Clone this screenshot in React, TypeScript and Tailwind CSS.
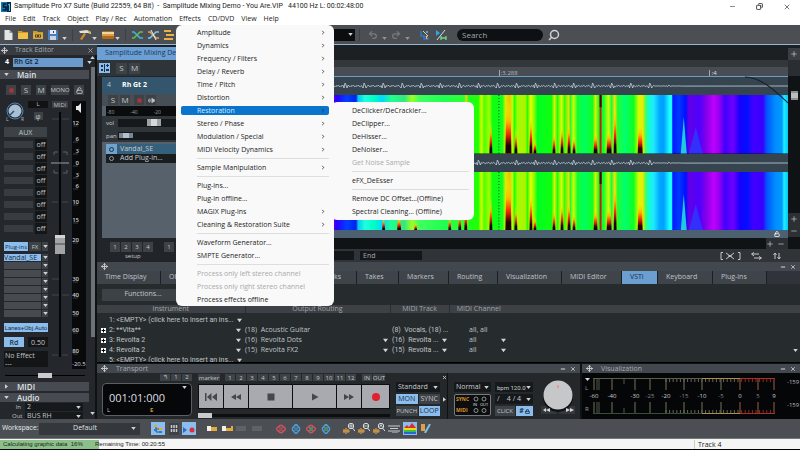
import type { ReactNode } from "react";
import clsx from "clsx";
import { Search, Undo2, Redo2, X, Minus, Plus, Copy, Lock, LockOpen, Volume2, Move } from "lucide-react";

const MENUS = ["File", "Edit", "Track", "Object", "Play / Rec", "Automation", "Effects", "CD/DVD", "View", "Help"];

interface MenuEntry {
  label: string;
  sub?: boolean;
  disabled?: boolean;
}

// null = separator
const EFFECTS: (MenuEntry | null)[] = [
  { label: "Amplitude", sub: true },
  { label: "Dynamics", sub: true },
  { label: "Frequency / Filters", sub: true },
  { label: "Delay / Reverb", sub: true },
  { label: "Time / Pitch", sub: true },
  { label: "Distortion", sub: true },
  { label: "Restoration", sub: true },
  { label: "Stereo / Phase", sub: true },
  { label: "Modulation / Special", sub: true },
  { label: "MIDI Velocity Dynamics", sub: true },
  null,
  { label: "Sample Manipulation", sub: true },
  null,
  { label: "Plug-ins..." },
  { label: "Plug-in offline..." },
  { label: "MAGIX Plug-ins", sub: true },
  { label: "Cleaning & Restoration Suite", sub: true },
  null,
  { label: "Waveform Generator..." },
  { label: "SMPTE Generator..." },
  null,
  { label: "Process only left stereo channel", disabled: true },
  { label: "Process only right stereo channel", disabled: true },
  { label: "Process effects offline" },
];

const RESTORATION: (MenuEntry | null)[] = [
  { label: "DeClicker/DeCrackler..." },
  { label: "DeClipper..." },
  { label: "DeHisser..." },
  { label: "DeNoiser..." },
  { label: "Get Noise Sample", disabled: true },
  null,
  { label: "eFX_DeEsser" },
  null,
  { label: "Remove DC Offset...(Offline)" },
  { label: "Spectral Cleaning... (Offline)" },
];

function Menu({ items, active, className }: { items: (MenuEntry | null)[]; active?: string; className: string }) {
  return (
    <ul role="menu" className={clsx("rounded-md bg-[#f9f9f9] text-[7px] leading-[13px] text-[#1c1c1c]", className)}>
      {items.map((item, i) =>
        item === null ? (
          <li key={i} role="separator" className="ml-4 py-0.5">
            <div className="h-px bg-[#dedede]" />
          </li>
        ) : (
          <li key={i} role="none" className="flex h-[13px] items-center">
            <button
              role="menuitem"
              disabled={item.disabled}
              className={clsx(
                "flex h-[9px] w-full items-center justify-between rounded-xs pr-1 pl-4 whitespace-nowrap",
                item.disabled && "text-[#a9a9a9]",
                active === item.label && "bg-[#0a74cc] text-[#d5ecff]"
              )}
            >
              {item.label}
              {item.sub && (
                <svg viewBox="0 0 4 6" className="h-[5px] w-1" fill="none" stroke={active === item.label ? "#1c3c60" : "#333"}>
                  <path d="M1 1l2 2-2 2" />
                </svg>
              )}
            </button>
          </li>
        )
      )}
    </ul>
  );
}

function Caret({ className }: { className?: string }) {
  return (
    <svg viewBox="0 0 6 4" className={clsx("h-[3px] w-[5px] shrink-0", className)} fill="#d0d3d6">
      <path d="M0 0h6L3 4z" />
    </svg>
  );
}

function Divider() {
  return <div className="h-3 w-px bg-[#3b3f43]" />;
}

function DropDown({ label, value, className }: { label: string; value: string; className: string }) {
  return (
    <div className={clsx("flex items-center bg-[#16191b] pr-0.5", className)}>
      <select aria-label={label} className="min-w-0 flex-1 appearance-none bg-transparent pl-0.5 text-inherit outline-none">
        <option>{value}</option>
      </select>
      <Caret />
    </div>
  );
}

function Chip({ children, on, className }: { children: ReactNode; on?: boolean; className?: string }) {
  return (
    <button
      className={clsx(
        "flex items-center justify-center whitespace-nowrap",
        on ? "bg-[#8cbdec] text-[#17314b]" : "bg-[#3d4247] text-[#c3c6c9]",
        className
      )}
    >
      {children}
    </button>
  );
}

function DockTitle({ title, buttons = true }: { title?: string; buttons?: boolean }) {
  return (
    <div className="flex h-[9px] shrink-0 items-center gap-2 bg-[#43474e] px-1 text-[7px] leading-[9px] text-[#a6aaae]">
      <Move className="size-[7px] text-[#d5d8da]" strokeWidth={3} />
      <span className="flex-1">{title}</span>
      {buttons && (
        <>
          <button aria-label="Minimize panel" className="-mr-1">
            <Minus className="size-[6px] text-[#d5d8da]" strokeWidth={4} />
          </button>
          <button aria-label="Close panel">
            <X className="size-[6px] text-[#d5d8da]" strokeWidth={3} />
          </button>
        </>
      )}
    </div>
  );
}

function AppLogo() {
  return (
    <svg viewBox="0 0 10 10" className="size-[10px]">
      <path fill="#1679b5" d="M0 0h10v10H0z" />
      <path fill="#0a2a42" d="M6 0h4v10H6z" />
      <path d="M5.500 2H2.500v3H5v3H1.500" fill="none" stroke="#061c2d" strokeWidth="1.600" />
      <path d="M7 3l1.500-1v7" fill="none" stroke="#53c4f2" />
    </svg>
  );
}

function TitleBar() {
  return (
    <div className="flex h-[13px] items-center gap-[3px] bg-white px-px text-[7px] text-[#1c1c1c]">
      <AppLogo />
      <span className="flex-1 font-['Roboto',sans-serif] whitespace-pre">
        Samplitude Pro X7 Suite (Build 22559, 64 Bit)  -  Samplitude Mixing Demo - You Are.VIP   44100 Hz L: 00:02:48:00
      </span>
      <div className="flex gap-5 pr-2 text-[#333]">
        <button aria-label="Minimize"><Minus className="size-[7px]" /></button>
        <button aria-label="Restore"><Copy className="size-[7px] rotate-90" strokeWidth={3} /></button>
        <button aria-label="Close"><X className="size-2" /></button>
      </div>
    </div>
  );
}

function Toolbar() {
  return (
    <div className="flex h-5 shrink-0 items-center border-b border-[#8fb8d8] bg-[#4b4f54]">
      <div className="flex w-[334px] items-center gap-[5px] pl-1">
        <svg viewBox="0 0 8 10" className="h-[10px] w-[9px]"><path d="M0 0h5l3 3v7H0z" fill="#e2e4e6" /><path d="M5 0v3h3" fill="#999" /></svg>
        <svg viewBox="0 0 10 9" className="h-[9px] w-[10px]"><path d="M0 1h4l1 1h5v7H0z" fill="#cf9a1d" /><path d="M0 3h10v6H0z" fill="#efc14a" /></svg>
        <svg viewBox="0 0 10 9" className="h-[9px] w-[10px]"><path d="M0 1h4l1 1h5v7H0z" fill="#d09c20" /><path d="M0 3h10v6H0z" fill="#dbac3b" /><path d="M2 4.500h6v3H2z" fill="#574415" /><path d="M3 6h1m2 0h1" stroke="#eee" /></svg>
        <svg viewBox="0 0 10 10" className="size-[10px]"><path d="M0 0h9l1 1v9H0z" fill="#4c7fc0" /><path d="M2 0h6v4H2z" fill="#e8ecf2" /><path d="M2 6h6v4H2z" fill="#cdd4dd" /><path d="M5.500 1v2" stroke="#345" /></svg>
        <Caret className="mt-2 -ml-px" />
        <Divider />
        <svg viewBox="0 0 12 10" className="ml-px h-[10px] w-3"><path d="M0 1l8-1 4 2v2L9 3H1z" fill="#e3e1da" /><path d="M5 3l2 1-4 6-2-1z" fill="#d28b24" /><path d="M8 0l4 2-1 2z" fill="#e79c2c" /></svg>
        <Caret className="mt-2 -ml-1" />
        <svg viewBox="0 0 12 8" className="h-2 w-3"><rect width="12" height="8" rx="1" fill="#ad6b1c" /><path d="M0 3h12V1H0z" fill="#ecd7a8" /><path d="M0 3h12v2H0z" fill="#e69a38" /></svg>
        <Caret className="mt-2 -ml-1" />
        <Divider />
        <svg viewBox="0 0 11 10" className="ml-px h-[10px] w-[11px]" fill="none" strokeWidth="1.600"><path d="M0 2h2l6 6h3" stroke="#37b5ec" /><path d="M0 8h2l6-6h3" stroke="#62bd4c" /></svg>
        <svg viewBox="0 0 11 10" className="h-[10px] w-[11px]" fill="none" strokeWidth="1.600"><path d="M0 2h2l6 6h3" stroke="#eaa14a" /><path d="M0 8h2l6-6h3" stroke="#7cc7ef" /><path d="M3 0l5 10" stroke="#eee" strokeWidth="1" /></svg>
        <svg viewBox="0 0 10 10" className="size-[10px]" strokeWidth="2"><path d="M0 1h7M2 5h8M0 9h9" stroke="#edb042" /></svg>
      </div>
      <div className="flex h-3 w-[21px] items-center justify-end bg-[#0b0d0e] pr-[2px]"><Caret /></div>
      <div className="ml-1 flex items-center gap-1 text-[#777b80]">
        <Divider />
        <Undo2 className="ml-1 size-[10px]" strokeWidth={3} />
        <Caret className="mt-2 opacity-50" />
        <Redo2 className="size-[10px]" strokeWidth={3} />
        <Caret className="mt-2 opacity-50" />
      </div>
      <svg viewBox="0 0 10 10" className="ml-[10px] size-[10px]"><path d="M1 1v5h3v3h5" fill="none" stroke="#2b79c9" strokeWidth="1.500" /><path d="M3 1l5 5-2 .5L7 9" fill="none" stroke="#e8d48c" /><path d="M6 1h2v2H6z" fill="#40a5ec" /></svg>
      <svg viewBox="0 0 12 10" className="ml-[5px] h-[10px] w-3"><path d="M1 0l4 3-4 3z" fill="#26a8ec" /><path d="M10 0L2 10" stroke="#d7dadb" /><path d="M6 6v4m5-4v4M6 8h5" stroke="#6cd78d" strokeWidth="1.300" /></svg>
      <input
        type="search"
        aria-label="Search"
        placeholder="Search"
        className="ml-[10px] h-3 w-[86px] rounded-full bg-[#0e1113] px-[5px] text-[8px] text-[#a0a4a8] outline-none placeholder:text-[#a0a4a8]"
      />
      <button aria-label="Find" className="ml-[5px]">
        <Search className="size-3 -scale-x-100 text-[#d0d3d6]" strokeWidth={3} />
      </button>
    </div>
  );
}

const SCALE: [string, number][] = [
  ["12", 22], ["6", 38], ["3", 50], ["0", 62], ["3", 74], ["6", 85], ["10", 101], ["15", 119],
  ["20", 139], ["30", 178], ["40", 194], ["50", 212], ["60", 229], ["80", 250],
];

function ChannelFader() {
  return (
    <svg viewBox="48 0 40 268" className="h-[268px] w-10 shrink-0">
      <rect x="72" y="0" width="14" height="268" fill="#08090a" />
      <rect x="52" y="0" width="16" height="7" fill="#3a3e42" />
      <text x="60" y="6" textAnchor="middle" fontSize="6" fill="#b9bcbf">MIDI</text>
      <path d="M76 5h2l3-3v10l-3-3h-2z" fill="#e6e8ea" />
      <path d="M60 11v245" stroke="#050607" strokeWidth="2" />
      <path d="M52 18h7M62 18h7M52 101h6M62 101h6M52 178h7M52 194h7M62 194h7M52 254h6M62 254h6" stroke="#42474b" />
      <path d="M51 62h18" stroke="#9a9da0" />
      <path d="M54 54v-3h4M63 51h4v3M54 69v3h4M63 72h4v-3" fill="none" stroke="#5d6165" />
      {SCALE.map(([label, y]) => (
        <g key={y}>
          <text x="79" y={y + 2} textAnchor="end" fontSize="6" fontWeight="600" fill="#c9ccce">{label}</text>
          <path d={`M73 ${y + 3}h5`} stroke="#3b3f42" />
        </g>
      ))}
      <text x="72" y="265" fontSize="6" fill="#dcdee0">-20.5</text>
      <rect x="55" y="134" width="10" height="19" fill="#a2a4a6" />
      <path d="M55 134h10v3H55z" fill="#d3d4d5" />
      <path d="M55 143h10" stroke="#45484b" />
    </svg>
  );
}

function SectionBar({ title, open }: { title: string; open?: boolean }) {
  return (
    <button className="flex h-[9px] w-[89px] shrink-0 items-center gap-2 bg-[#474b51] pl-1 text-[8px] font-semibold text-[#dfe1e3]">
      <Caret className={open ? "" : "-rotate-90"} />
      {title}
    </button>
  );
}

function TrackEditor() {
  return (
    <aside className="flex w-[97px] shrink-0 flex-col overflow-hidden bg-[#24282c] text-[7px] text-[#c3c6c9]">
      <div className="flex h-[10px] shrink-0 items-center bg-[#383c41] px-px text-[#a6aaae]">
        <Move className="size-[7px] text-[#d5d8da]" strokeWidth={3} />
        <span className="ml-[7px] flex-1">Track Editor</span>
        <button aria-label="Close track editor"><X className="mr-[2px] size-[7px]" strokeWidth={3} /></button>
      </div>
      <div className="flex min-h-0 flex-1">
        <div className="flex min-w-0 flex-1 flex-col">
          <div className="flex h-[15px] shrink-0 items-center gap-1 pl-[5px]">
            <span className="font-bold text-white">4</span>
            <input aria-label="Track name" defaultValue="Rh Gt 2" className="h-[9px] w-[70px] bg-[#6a9bcc] px-px text-[7px] font-semibold text-[#10253a] outline-none" />
            <Caret />
          </div>
          <SectionBar title="Main" open />
          <div className="flex h-[22px] shrink-0 items-center justify-between pr-[6px] pl-[6px]">
            <Chip className="size-[10px]"><span className="size-[5px] rounded-full bg-[#a3333d]" /></Chip>
            <Chip className="size-[10px] text-[8px]">S</Chip>
            <Chip className="size-[10px] text-[8px]">M</Chip>
            <Chip className="h-[10px] w-[18px] text-[6px]">MONO</Chip>
            <Chip className="size-[10px]"><LockOpen className="size-[7px]" strokeWidth={3} /></Chip>
          </div>
          <div className="flex shrink-0">
            <div className="flex w-12 shrink-0 flex-col pl-1 leading-none">
              <div className="flex h-[26px] gap-1">
                <svg viewBox="0 0 20 21" className="h-[21px] w-5">
                  <circle cx="11" cy="10" r="8" fill="none" stroke="#4f86b8" />
                  <circle cx="11" cy="10" r="6.500" fill="#a9bfd2" />
                  <path d="M10 10l-6 6" stroke="#254f77" strokeWidth="1.500" />
                  <text x="2" y="20" fontSize="5" fill="#b9bcbf">L</text>
                  <text x="17" y="20" fontSize="5" fill="#b9bcbf">R</text>
                </svg>
                <div className="flex flex-1 flex-col items-center gap-1">
                  <span className="h-[7px] w-full bg-[#101214] text-center text-[6px]">L</span>
                  <Chip className="h-[8px] w-[9px] text-[7px]">φ</Chip>
                </div>
              </div>
              <Chip className="h-[10px] w-[43px]">AUX</Chip>
              <div className="mt-px flex flex-col">
                {Array.from({ length: 8 }, (_, i) => (
                  <div key={i} className="flex h-3 items-center gap-[2px]">
                    <span className="h-[7px] w-[29px] bg-[#383c40]" />
                    <span className="flex h-[11px] w-3 items-center justify-center bg-[#131517]">off</span>
                  </div>
                ))}
              </div>
              <div className="mt-2 flex h-[9px] gap-px text-[6px]">
                <Chip on className="w-6">Plug-ins</Chip>
                <Chip className="w-3">FX</Chip>
                <Chip className="w-[6px]"><Caret /></Chip>
              </div>
              <div className="mt-[3px] flex h-[7px] gap-px">
                <button className="w-[37px] bg-[#8cbdec] text-left text-[7px] leading-[7px] text-[#17314b]">Vandal_SE</button>
                <Chip className="w-[6px]"><Caret /></Chip>
              </div>
              {Array.from({ length: 7 }, (_, i) => (
                <div key={i} className="mt-px flex h-[7px] gap-px">
                  <span className="w-[37px] bg-[#474b50]" />
                  <Chip className="w-[6px]"><Caret /></Chip>
                </div>
              ))}
              <Chip on className="mt-[6px] h-[9px] w-11 font-['Roboto',sans-serif] text-[6px]">Lanes+Obj.Auto</Chip>
              <div className="mt-[5px] flex h-[10px] gap-1">
                <Chip on className="w-5 font-semibold">Rd</Chip>
                <span className="flex flex-1 items-center justify-center bg-[#131517]">0.50</span>
              </div>
              <div className="mt-1 h-4 w-11 bg-[#131517] p-px leading-2">No Effect<br />---</div>
            </div>
            <ChannelFader />
          </div>
          <div className="flex h-[13px] shrink-0 items-center justify-center">
            <input type="range" aria-label="Pan" className="h-[5px] w-[80px] appearance-none border-y-2 border-[#24282c] bg-black [&::-webkit-slider-thumb]:h-[5px] [&::-webkit-slider-thumb]:w-[14px] [&::-webkit-slider-thumb]:appearance-none [&::-webkit-slider-thumb]:bg-[#c9cbcd]" />
          </div>
          <div className="flex flex-col gap-[2px]">
            <SectionBar title="MIDI" />
            <SectionBar title="Audio" open />
          </div>
          <div className="flex flex-col gap-px pt-px pl-3 leading-[8px]">
            <label className="flex items-center gap-1"><span className="w-[9px] text-right text-[6px]">In</span><DropDown label="Audio in" value=" 2" className="h-2 w-[58px]" /></label>
            <label className="flex items-center gap-1"><span className="w-[9px] text-right text-[6px]">Out</span><DropDown label="Audio out" value="BUS RH" className="h-2 w-[58px]" /></label>
          </div>
        </div>
        <div className="flex w-[5px] shrink-0 flex-col items-center pt-px pb-1">
          <Caret className="rotate-180" />
          <div className="mt-2 h-[270px] w-1 bg-[#6b7379]" />
          <Caret className="mt-auto" />
        </div>
        <div className="w-[2px] bg-[#0f1113]" />
      </div>
    </aside>
  );
}

function TrackHeader() {
  return (
    <div className="flex w-[231px] shrink-0 flex-col bg-[#56616c] text-[7px] text-[#c9ccce]">
      <div className="flex h-[17px] shrink-0 items-center gap-[11px] bg-[#34566c] pl-[5px]">
        <span className="text-[#a9c3d5]">4</span>
        <span className="font-bold text-white">Rh Gt 2</span>
      </div>
      <div className="flex h-3 shrink-0 items-center gap-[2px] bg-[#474e55] pl-[6px]">
        <Chip className="size-[10px] text-[8px]">S</Chip>
        <Chip className="size-[10px] text-[8px]">M</Chip>
        <Chip className="ml-[2px] size-[10px]"><span className="size-[5px] rounded-full bg-[#a3333d]" /></Chip>
        <Chip className="size-[10px]"><Volume2 className="size-[7px] -scale-x-100 fill-current" /></Chip>
      </div>
      <div className="ml-1 flex h-[10px] shrink-0 items-end gap-4 bg-[#0a0c0d] pb-px text-[5px] leading-none text-[#9a9da0]">
        <span className="ml-px">-80</span><span>-40</span><span>-20</span>
      </div>
      <div className="flex h-[26px] shrink-0 flex-col justify-around bg-[#30353a] pl-1">
        <label className="flex items-center gap-1 leading-none">
          <span className="w-2 text-[6px]">vol</span>
          <span className="flex h-2 flex-1 items-center bg-[#16191b]"><span className="ml-[29px] h-[7px] w-[14px] border-x-4 border-[#9fa2a5] bg-[#d5d7d9]" /></span>
        </label>
        <label className="flex items-center gap-1 leading-none">
          <span className="w-2 text-[6px]">pan</span>
          <span className="flex h-2 flex-1 items-center bg-[#16191b]"><span className="ml-px h-[5px] w-[14px] border-x-4 border-[#75879a] bg-[#b4c0cb]" /></span>
        </label>
      </div>
      <div className="mt-[2px] ml-1 flex h-[10px] shrink-0 items-center gap-[3px] bg-[#34607c]">
        <span className="flex h-full w-[11px] items-center justify-center bg-[#6fa3cc]"><span className="size-[5px] rounded-full border border-[#193248]" /></span>
        Vandal_SE
      </div>
      <button className="ml-1 flex h-[9px] shrink-0 items-center gap-[3px] bg-[#1a1d20]">
        <span className="flex w-[11px] justify-center"><span className="size-[5px] rounded-full border border-[#9a9da0]" /></span>
        Add Plug-in...
      </button>
    </div>
  );
}

// horizontal colour profile of the spectrogram, x in lane units (0..454)
const SPECTRUM: [number, string][] = [
  [0, "#6000e0"], [4, "#2a00ff"], [14, "#0040ff"], [23, "#0020f0"], [25, "#00c8f0"], [32, "#20ffe0"], [41, "#00ffc0"],
  [49, "#00d8ff"], [58, "#20ff90"], [71, "#30e880"], [79, "#a0ff20"], [86, "#40ff60"], [111, "#20ff50"], [131, "#30ff30"],
  [133, "#ffd000"], [135, "#20ff20"], [145, "#20ff00"], [148, "#d0ff00"], [151, "#50ff00"], [156, "#a0ff00"], [159, "#10ff10"],
  [169, "#10ff20"], [172, "#d0f000"], [176, "#f0c000"], [179, "#c0ff00"], [181, "#20ff10"], [184, "#a0ff00"], [192, "#b0f000"],
  [194, "#20ff00"], [197, "#e8ff00"], [201, "#80ff00"], [204, "#00ff20"], [218, "#10ff10"], [221, "#e0f000"], [224, "#20ff10"],
  [228, "#e0ff00"], [231, "#30ff10"], [235, "#e8e000"], [237, "#20ff30"], [240, "#d0ff00"], [244, "#10ff30"], [251, "#00ff60"],
  [259, "#10ff20"], [262, "#e0f000"], [265, "#20ff20"], [270, "#10ff30"], [275, "#d0ff00"], [278, "#10ff40"], [281, "#ffe000"],
  [284, "#20ff30"], [291, "#00ff70"], [300, "#10ff20"], [305, "#d0ff00"], [309, "#f0e800"], [312, "#40ff60"], [315, "#10ffd0"],
  [320, "#20e8ff"], [326, "#00a8ff"], [330, "#00a0ff"], [336, "#20ffff"], [338, "#10ffff"], [339, "#0018ff"], [345, "#0038ff"],
  [352, "#0010ff"], [355, "#6000e8"], [366, "#5000ff"], [372, "#8000e8"], [380, "#c000ff"], [386, "#9000f0"], [391, "#4000ff"],
  [399, "#7000ff"], [406, "#1800ff"], [413, "#0010ff"], [419, "#4000ff"], [429, "#3800ff"], [433, "#0058ff"], [442, "#0090ff"],
  [448, "#0098ff"], [450, "#20f0ff"], [454, "#00c8ff"],
];

// transients: x, width, height
const BURSTS: [number, number, number][] = [
  [49, 3, 14], [64, 4, 14], [81, 3, 8], [115, 3, 14], [125, 3, 18], [131, 3, 26], [156, 3, 32], [172, 6, 52], [181, 3, 26],
  [196, 3, 40], [200, 3, 14], [219, 3, 22], [227, 3, 30], [234, 3, 32], [239, 3, 18], [260, 4, 22], [273, 5, 24],
  [280, 3, 48], [304, 5, 30],
];

function wavePath() {
  const pts: string[] = [];
  for (let x = 0; x < 350; x += 1) {
    const phase = x % 19;
    const spike = [2, -3, -1, 2][phase - 11] ?? (((x * 7) % 5) - 2) * 0.4;
    pts.push(`${x} ${(9 + spike * (x > 320 ? 0.3 : 1)).toFixed(1)}`);
  }
  return `M${pts.join("L")}L454 9`;
}

function WaveLane({ fade }: { fade?: boolean }) {
  return (
    <svg viewBox="0 0 454 18" preserveAspectRatio="none" className="relative z-10 h-[18px] w-full shrink-0 overflow-visible bg-[#35444f]">
      <path d={wavePath()} fill="none" stroke="#c3d2da" strokeWidth="0.800" />
      {fade && <path d="M411 0c18 1 30 14 43 26" fill="none" stroke="#14202a" />}
    </svg>
  );
}

function SpectrumLane() {
  return (
    <svg viewBox="0 0 454 58" preserveAspectRatio="none" className="min-h-0 w-full flex-1">
      <defs>
        <linearGradient id="spec">
          {SPECTRUM.map(([x, c]) => (
            <stop key={x} offset={x / 454} stopColor={c} />
          ))}
        </linearGradient>
        <linearGradient id="burst" x2="0" y2="1">
          <stop offset="0" stopColor="#ffff00" stopOpacity="0" />
          <stop offset="0.400" stopColor="#ffb000" />
          <stop offset="0.650" stopColor="#f02000" />
          <stop offset="0.850" stopColor="#200000" />
        </linearGradient>
      </defs>
      <path d="M0 0h454v58H0z" fill="url(#spec)" />
      {BURSTS.map(([x, w, h]) => (
        <path key={x} d={`M${x} 58l1 ${-h}h${w - 2}l1 ${h}z`} fill="url(#burst)" />
      ))}
      <path d="M266 0h2v58h-2z" fill="#c02010" />
      <path d="M266 0h2v12h-2z" fill="#400" />
      <path d="M347 58l3-36 3 36z" fill="#20c8e0" />
      <path d="M355 58l7-26 7 26z" fill="#1060ff" opacity="0.500" />
      <path d="M165.500 0v58" stroke="#0a4a10" strokeDasharray="1 2" />
    </svg>
  );
}

function Arrange() {
  return (
    <section className="flex min-h-0 flex-1 flex-col">
      <div className="flex h-[15px] shrink-0 items-end bg-[#1c2023]">
        <div className="flex h-[13px] w-[236px] items-center bg-[#6c9fd4] pl-2 text-[7px] text-[#1c3a58]">Samplitude Mixing Demo</div>
        <button aria-label="Add tab" className="ml-auto flex size-3 items-center justify-center bg-[#3b3f43] text-[#c9ccce]"><Plus className="size-2" /></button>
      </div>
      <div className="flex min-h-0 flex-1">
        <div className="flex w-[236px] shrink-0 flex-col bg-[#212529]">
          <div className="flex h-4 shrink-0 items-center gap-[2px] bg-[#2f3439] pl-[2px]">
            <Chip on className="mr-1 h-[10px] w-[11px]">
              <svg viewBox="0 0 8 8" className="size-2" fill="#18324c"><path d="M0 1h2v2H0zM3 0h1v8H3zM0 5h2v2H0zM5 1h3v1H5zM6 0h1v3H6zM5 5h3v2H5z" /></svg>
            </Chip>
            <Chip className="size-[11px] text-[8px]">S</Chip>
            <Chip className="size-[11px] text-[8px]">M</Chip>
          </div>
          <div className="flex min-h-0 flex-1 pt-px pl-[5px]"><TrackHeader /></div>
          <div className="flex h-6 shrink-0 flex-col pt-1 pl-[13px] text-[6px] text-[#c9ccce]">
            <div className="flex gap-px leading-none text-[#777b80]">
              {["1", "2", "3", "4"].map((n) => <Chip key={n} className="h-[10px] w-[10px] text-[#85898d]">{n}</Chip>)}
              <Chip className="ml-[10px] size-[10px]">1</Chip>
            </div>
            <span className="ml-[15px] leading-[9px]">setup</span>
          </div>
        </div>
        <div className="flex min-w-0 flex-1 flex-col">
          <div className="flex min-h-0 flex-1">
            <div className="flex min-w-0 flex-1 flex-col">
              <div className="h-[7px] shrink-0 bg-[#33373b]" />
              <div className="flex h-[10px] shrink-0 items-end border-b border-[#6c9dc4] bg-[#484d53] text-[6px] leading-[9px] text-[#b3b7ba]">
                <span className="w-[36%]" />
                <span className="ml-[2px] border-l border-[#a3a7aa] pl-px leading-[6px]">:3.288</span>
                <span className="ml-[191px] border-l border-[#a3a7aa] pl-[2px] leading-[6px] text-[#dfe1e3]">:4</span>
              </div>
              <WaveLane fade />
              <SpectrumLane />
              <WaveLane />
              <SpectrumLane />
              <div className="flex h-2 shrink-0 items-center justify-end bg-[#4d6070] pr-2"><LockOpen className="size-[6px] text-white" strokeWidth={3} /></div>
            </div>
            <div className="flex w-3 shrink-0 flex-col items-center bg-[#101315] pb-px text-[#c9ccce]">
              <div className="mb-[15px] h-4 w-full bg-[#2a2e32]" />
              <div className="h-[9px] w-[7px] border-y-2 border-[#8d9093] bg-[#bbbdbf]" />
              <button aria-label="Zoom in vertically" className="mt-auto bg-[#2c3034] p-0.5"><Plus className="size-2" /></button>
              <button aria-label="Zoom out vertically" className="bg-[#2c3034] p-0.5"><Minus className="size-2" /></button>
            </div>
          </div>
          <div className="flex h-[11px] shrink-0 items-center justify-end bg-[#101315] pr-3 text-[#c9ccce]">
            <button aria-label="Zoom in" className="flex h-full w-[11px] items-center bg-[#2c3034]"><Plus className="size-2" /></button>
            <button aria-label="Zoom out" className="flex h-full w-[11px] items-center bg-[#2c3034]"><Minus className="size-2" /></button>
          </div>
          <div className="flex h-[13px] shrink-0 items-center bg-[#303439] text-[7px] text-[#a6aaae]">
            <div className="h-[9px] w-[21px] bg-[#14171a]" />
            <div className="ml-[6px] h-[9px] w-[62px] bg-[#14171a] pl-[3px] leading-[9px]">End</div>
            <svg viewBox="0 0 64 8" className="mr-4 ml-auto h-2 w-16" fill="none" stroke="#c3c6c9">
              <path d="M3 .5H1v7h2M18 .5h2v7h-2M6 1l8 6M14 1L6 7M8 4h4" />
              <path d="M32 2h7M34 .5L31.500 2 34 4M34 6h7M39 4.500L41.500 6 39 7.500M55 1v6M53.500 3L55 1l1.500 2M59 1v6M57.500 5L59 7l1.500-2" />
            </svg>
          </div>
        </div>
      </div>
    </section>
  );
}

const DOCK_TABS = [
  { label: "Time Display", width: "w-[64px]" },
  { label: "Object", width: "w-[151px]" },
  { label: "Tracks", width: "w-[45px]" },
  { label: "Takes", width: "w-[42px]" },
  { label: "Markers", width: "w-[50px]" },
  { label: "Routing", width: "w-[49px]" },
  { label: "Visualization", width: "w-[64px]" },
  { label: "MIDI Editor", width: "w-[60px]" },
  { label: "VSTi", width: "w-[36px]" },
  { label: "Keyboard", width: "w-[55px]" },
  { label: "Plug-ins", width: "w-[54px]" },
];

const INSTRUMENTS = [
  { name: "1: <EMPTY> (click here to insert an ins...", routing: "", track: "", channel: "" },
  { name: "2: **Vita**", routing: "(18)  Acoustic Guitar", track: "(8)  Vocals, (18) ...", channel: "all, all" },
  { name: "3: Revolta 2", routing: "(16)  Revolta Dots", track: "(16)  Revolta ...", channel: "all" },
  { name: "4: Revolta 2", routing: "(15)  Revolta FX2", track: "(15)  Revolta ...", channel: "all" },
  { name: "5: <EMPTY> (click here to insert an ins...", routing: "", track: "", channel: "" },
];

function InstrumentCell({ text, arrow, className }: { text: string; arrow?: boolean; className?: string }) {
  return (
    <td className={clsx("whitespace-pre", className)}>
      <div className="flex items-center justify-between pr-[2px]">
        {text}
        {arrow && <Caret className="h-[5px]" />}
      </div>
    </td>
  );
}

function Dock() {
  return (
    <section className="flex h-[101px] shrink-0 flex-col overflow-hidden border-b border-black bg-[#262b2e] text-[7px] text-[#c0c3c6]">
      <DockTitle />
      <div role="tablist" className="flex h-[13px] shrink-0 bg-[#30343a]">
        {DOCK_TABS.map((tab) => (
          <button
            key={tab.label}
            role="tab"
            aria-selected={tab.label === "VSTi"}
            className={clsx(
              "shrink-0 border-r border-[#1c1f22] pl-2 text-left whitespace-nowrap",
              tab.width,
              tab.label === "VSTi" ? "bg-[#6b9fd2] text-[#15304a]" : "bg-[#3f434a]"
            )}
          >
            {tab.label}
          </button>
        ))}
      </div>
      <div className="flex h-[21px] shrink-0 items-center pl-[5px]">
        <Chip className="h-3 w-[82px]">Functions...</Chip>
      </div>
      <table className="w-full table-fixed leading-[10px]">
        <thead className="bg-[#3d4146] text-[7px] leading-2 text-[#a0a4a8]">
          <tr>
            <th className="w-[148px] border-r border-[#2a2e31] font-normal">Instrument</th>
            <th className="w-[145px] border-r border-[#2a2e31] font-normal">Output Routing</th>
            <th className="w-[59px] border-r border-[#2a2e31] font-normal">MIDI Track</th>
            <th className="w-[59px] font-normal">MIDI Channel</th>
            <th />
          </tr>
        </thead>
        <tbody>
          <tr className="h-[2px] leading-none"><td colSpan={5} /></tr>
          {INSTRUMENTS.map((row, i) => (
            <tr key={row.name} className="h-[10px]">
              <td className="whitespace-nowrap">
                <div className="flex items-center gap-[3px] pr-1 pl-1">
                  {row.routing ? (
                    <span className="flex size-[5px] shrink-0 items-center justify-center bg-white text-black"><Plus className="size-[5px]" strokeWidth={5} /></span>
                  ) : (
                    <span className="w-[5px] shrink-0" />
                  )}
                  <span className="flex-1 font-['Roboto','Open_Sans',sans-serif]">{row.name}</span>
                  <Caret className="h-[5px]" />
                </div>
              </td>
              <InstrumentCell text={row.routing} arrow={i === 2 || i === 3} />
              <InstrumentCell text={row.track} arrow={i === 2 || i === 3} className="pl-[2px] font-['Roboto','Open_Sans',sans-serif]" />
              <InstrumentCell text={row.channel} arrow={i === 2 || i === 3} className="pl-5" />
              <td>{i === 3 && <Caret className="mr-[2px] ml-auto" />}</td>
            </tr>
          ))}
        </tbody>
      </table>
    </section>
  );
}

function TransportButton({ label, className, children }: { label: string; className: string; children: ReactNode }) {
  return (
    <button aria-label={label} className={clsx("flex h-[23px] items-center justify-center bg-[#a8aaaf]", className)}>
      <svg viewBox="0 0 12 8" className="h-2 w-3" fill="#44474b">{children}</svg>
    </button>
  );
}

function SyncBox() {
  return (
    <svg viewBox="0 0 37 22" className="h-[22px] w-[37px]">
      <rect x="0.500" y="0.500" width="36" height="21" rx="1.500" fill="#0c0d0e" stroke="#777b7f" />
      <g fontSize="5" fontWeight="700" fill="#dc9228">
        <text x="2" y="7">SYNC</text>
        <text x="2" y="18">MIDI</text>
      </g>
      <g fill="none" stroke="#a9acaf" strokeWidth="0.800">
        <circle cx="22" cy="5" r="2" />
        <circle cx="30" cy="5" r="2" />
        <circle cx="22" cy="16.500" r="2" />
        <circle cx="30" cy="16.500" r="2" />
      </g>
      <g fontSize="4" fill="#dfe1e3">
        <text x="19" y="12">IN</text>
        <text x="26" y="12">OUT</text>
      </g>
    </svg>
  );
}

function Transport() {
  return (
    <section className="flex w-[483px] shrink-0 flex-col bg-[#24282b] text-[6px] text-[#c9ccce]">
      <DockTitle title="Transport" />
      <div className="flex flex-1 gap-[6px] pl-[5px]">
        <div className="flex w-[90px] flex-col gap-px">
          <div className="flex h-[9px] items-center justify-end gap-px">
            {["↰", "1", "2"].map((t) => <Chip key={t} className="h-[7px] w-[10px]">{t}</Chip>)}
          </div>
          <div className="flex h-[33px] flex-col justify-between rounded-sm border border-[#5b5f63] bg-[#060708] px-1 py-[2px]">
            <Caret className="self-end" />
            <output className="pl-[2px] text-[11px] leading-[14px] text-[#dcdfe1]">001:01:000</output>
            <div className="flex h-[6px] leading-[6px]"><span className="w-[43px]">L</span><span className="font-bold text-[#c8963c]">E</span></div>
          </div>
        </div>
        <div className="flex w-[192px] flex-col">
          <div className="flex h-[9px] items-center gap-px leading-none">
            <Chip className="mr-1 h-[7px] w-[22px]">marker</Chip>
            {Array.from({ length: 12 }, (_, i) => <Chip key={i} className="h-[7px] w-[10px]">{i + 1}</Chip>)}
            <Chip className="ml-[5px] h-[7px] w-[10px]">IN</Chip>
            <Chip className="h-[7px] w-[12px]">OUT</Chip>
          </div>
          <div className="mt-[2px] flex gap-px bg-[#0c0e0f] p-px">
            <TransportButton label="To start" className="w-6"><path d="M0 0h1.500v8H0zM6.500 0v8L2 4zM12 0v8L7 4z" /></TransportButton>
            <TransportButton label="Rewind" className="w-6"><path d="M6 1v6L1 4zM11 1v6L6 4z" /></TransportButton>
            <TransportButton label="Stop" className="w-[43px]"><path d="M2.500 0.500h7v7h-7z" /></TransportButton>
            <TransportButton label="Play" className="w-[43px]"><path d="M3 0.500L9.500 4 3 7.500z" /></TransportButton>
            <TransportButton label="Forward" className="w-6"><path d="M1 1v6l5-3zM6 1v6l5-3z" /></TransportButton>
            <TransportButton label="Record" className="flex-1"><circle cx="6" cy="4" r="4" fill="#e0202c" /></TransportButton>
          </div>
          <input type="range" aria-label="Position" defaultValue={0} className="mt-1 h-[5px] w-full appearance-none border-y border-[#24282b] bg-[#0c0e0f] [&::-webkit-slider-thumb]:h-[5px] [&::-webkit-slider-thumb]:w-[14px] [&::-webkit-slider-thumb]:appearance-none [&::-webkit-slider-thumb]:bg-[#c9cbcd]" />
        </div>
        <div className="flex w-[52px] flex-col border-r border-[#0f1113]">
          <button aria-label="Close mode" className="flex h-[9px] items-center justify-end"><X className="size-[5px]" strokeWidth={4} /></button>
          <div className="flex items-center gap-1">
            <div className="grid w-11 grid-cols-2 gap-x-px gap-y-[2px] text-[7px]">
              <DropDown label="Mode" value="Standard" className="col-span-2 h-[10px]" />
              <Chip on className="h-[10px]">MON</Chip>
              <Chip className="h-[10px]">SYNC</Chip>
              <Chip className="h-[10px] text-[6px]">PUNCH</Chip>
              <Chip on className="h-[10px]">LOOP</Chip>
            </div>
            <Caret className="-ml-[2px] -rotate-90" />
          </div>
        </div>
        <div className="flex gap-1 pt-[9px]">
          <div className="flex w-[37px] flex-col gap-[2px]">
            <DropDown label="Speed" value="Normal" className="h-[10px] text-[7px]" />
            <SyncBox />
          </div>
          <div className="flex w-[38px] flex-col gap-[2px] text-[7px]">
            <DropDown label="Tempo" value="bpm 120.0" className="h-[10px] font-['Roboto',sans-serif] text-[6px]" />
            <DropDown label="Time signature" value={"/\u00a0\u00a0\u00a0\u00a04 / 4"} className="h-[10px]" />
            <div className="flex h-[10px] gap-px">
              <Chip className="w-5 text-[6px]">CLICK</Chip>
              <Chip on className="flex-1 gap-px font-bold"># <Lock className="size-[5px]" strokeWidth={4} /></Chip>
            </div>
          </div>
        </div>
        <svg viewBox="0 0 38 44" className="h-11 w-[38px]">
          <path d="M2 33h16v8H2zM20 33h16v8H20z" fill="#34383c" />
          <circle cx="19" cy="24" r="15" fill="#0f1113" />
          <circle cx="19" cy="22" r="14.500" fill="#c6c7c8" />
          <path d="M19 12v3" stroke="#e29a9e" strokeWidth="2" />
          <path d="M7 35v4l-3-2zM11 35v4l-4-2zM27 35v4l4-2zM31 35v4l4-2z" fill="#d5d8da" />
        </svg>
      </div>
    </section>
  );
}

const DB_SCALE: [string, number][] = [
  ["-60", 12], ["-40", 30], ["-30", 53], ["-25", 68], ["-20", 84], ["-15", 102], ["-10", 120], ["-5", 139], ["0", 158], ["5", 176], ["9", 192],
];

function Visualization() {
  const minor = Array.from({ length: 30 }, (_, i) => 84 + i * 3.6);
  return (
    <section className="flex min-w-0 flex-1 flex-col border-l-2 border-[#0f1113] bg-[#050607]">
      <DockTitle title="Visualization" />
      <svg viewBox="0 0 217 46" preserveAspectRatio="xMinYMid meet" className="min-h-0 w-full flex-1 overflow-hidden">
        <path d="M3 5h5l-2.500 3z" fill="#d5d8da" />
        <text x="3" y="17" fontSize="6" fill="#9a9da0">L</text>
        <text x="3" y="38" fontSize="6" fill="#9a9da0">R</text>
        <path d="M11 5.500h109" stroke="#5c5d4c" />
        <path d="M11 40.500h109" stroke="#35503a" />
        <path d="M120 5.500h38M120 40.500h38" stroke="#a88c56" />
        <path d="M158 5.500h35M158 40.500h35" stroke="#a83028" />
        {minor.map((x) => (
          <path key={x} d={`M${x} 6v3M${x} 37v3`} stroke={x > 158 ? "#8c2c24" : "#6c6753"} />
        ))}
        {DB_SCALE.map(([label, x]) => (
          <g key={label}>
            <path d={`M${x} 6v11M${x} 29v11`} stroke={x > 150 ? "#a05a40" : "#77725c"} />
            <text x={x} y="25" textAnchor="middle" fontSize="6" fill={label.endsWith("5") ? "#85888b" : "#d0d3d6"}>{label}</text>
          </g>
        ))}
        <path d="M15 6v11M15 29v11M17 6v11M17 29v11M42 6v5M42 35v5" stroke="#55574a" />
        <text x="205" y="11" fontSize="6" fill="#b9bcbf">-159</text>
        <text x="205" y="34" fontSize="6" fill="#b9bcbf">-159</text>
      </svg>
    </section>
  );
}

const OBJECT_TOOLS = ["#d8505c", "#4aa0e0", "#d8505c", "#4aa0e0"];

function WorkspaceBar() {
  return (
    <footer className="flex h-[19px] shrink-0 items-center bg-[#4b4f54] text-[7px] text-[#dfe1e3]">
      <label htmlFor="workspace" className="w-9 pl-[2px] font-['Roboto',sans-serif]">Workspace:</label>
      <div className="ml-[3px] flex h-3 w-[101px] items-center bg-[#34383c] pr-1">
        <select id="workspace" className="flex-1 appearance-none bg-transparent text-center outline-none"><option>Default</option></select>
        <Caret />
      </div>
      <Chip on className="ml-[11px] h-[13px] w-[14px]">
        <svg viewBox="0 0 10 10" className="size-[10px]"><path d="M3 2v6h4M3 5h3" stroke="#456" fill="none" /><path d="M1 1h3v2H1zM6 4h3v2H6z" fill="#e8a82c" /><path d="M6 7h3v2H6zM1 5h3v2H1z" fill="#2c7cc8" /></svg>
      </Chip>
      <Chip className="ml-1 h-3 w-[10px]">
        <svg viewBox="0 0 8 8" className="size-2"><path d="M1.500 0v8M4 0v8M6.500 0v8" stroke="#c9ccce" strokeDasharray="3 1" strokeWidth="1.500" /></svg>
      </Chip>
      <Chip on className="ml-[3px] h-[13px] w-[14px]">
        <svg viewBox="0 0 12 8" className="h-2 w-3"><path d="M0 2l4 3-4 3z" fill="#2c6cc0" /><circle cx="9" cy="5" r="2.500" fill="#d8303c" /></svg>
      </Chip>
      <svg viewBox="0 0 58 8" className="ml-[10px] h-2 w-[58px]">
        <path d="M1 1h4v5H1zM16 1h4v5h-4z" fill="#f1efe6" />
        <path d="M5 2h6v4H5zM20 3h5V1h2v5h-7z" fill="#e6a93c" />
        <path d="M30 1h10v5H30zM46 1h10v5H46z" fill="#5f6367" />
      </svg>
      <div className="ml-3 flex gap-[5px]">
        {OBJECT_TOOLS.map((color, i) => (
          <svg key={i} viewBox="0 0 10 10" className={clsx("size-[10px]", i % 2 === 1 && "rotate-90")} fill="none" stroke={color} strokeWidth="1.400">
            <path d="M0 5l4-3.500h2L10 5 6 8.500H4z" />
            <path d="M3 4h4M3 6h4" stroke={i < 2 ? color : "#5ac078"} strokeWidth="1" />
          </svg>
        ))}
      </div>
      <div className="ml-3 flex items-center gap-[3px]">
        {["M8 1v4M6 3h4", "M6 3h4", "M6.500 4.500L8 1.500l1.500 3"].map((d) => (
          <svg key={d} viewBox="0 0 12 11" className="h-[11px] w-3" fill="none">
            <path d="M0 8h1V6v4-2h2V5v6-3h2V6v4-2h2" stroke="#e0a044" strokeWidth="1.200" />
            <circle cx="8" cy="3" r="2.700" stroke="#dfe1e3" />
            <path d="M9.500 5l2.500 3" stroke="#dfe1e3" />
            <path d={d} stroke="#dfe1e3" strokeWidth="0.800" />
          </svg>
        ))}
        <svg viewBox="0 0 12 8" className="h-2 w-3"><path d="M0 1h12M2 3.500h8M0 6h12M4 8h6" stroke="#c9ccce" /></svg>
        <Chip on className="h-[13px] w-[14px]">
          <svg viewBox="0 0 12 11" className="h-[11px] w-3"><path d="M0 5l3-3 2 2 3-4 4 5v2H0z" fill="#e02c24" /><path d="M0 5h12v2H0z" fill="#f0d820" /><path d="M0 7h12v2H0z" fill="#38c040" /><path d="M0 9h12v2H0z" fill="#2468d8" /></svg>
        </Chip>
        <svg viewBox="0 0 10 9" className="ml-px h-[9px] w-[10px]"><path d="M0 0h4v7H0z" fill="#e0a044" /><path d="M9 0L4 9" stroke="#7cc0ee" strokeWidth="2" /></svg>
      </div>
    </footer>
  );
}

export default function App() {
  return (
    <div className="relative flex h-screen w-full flex-col overflow-hidden border-b border-black bg-[#101315] font-['Open_Sans','Noto_Sans',sans-serif] leading-normal">
      <TitleBar />
      <nav role="menubar" className="flex h-3 shrink-0 items-center gap-[7px] bg-white pl-[5px] text-[7px] text-[#1c1c1c]">
        {MENUS.map((m) => <button key={m} role="menuitem">{m}</button>)}
      </nav>
      <Toolbar />
      <main className="flex min-h-0 flex-1">
        <TrackEditor />
        <div className="flex min-w-0 flex-1 flex-col">
          <Arrange />
          <Dock />
          <div className="flex h-[56px] shrink-0 pt-px">
            <Transport />
            <Visualization />
          </div>
        </div>
      </main>
      <WorkspaceBar />
      <div className="flex h-[11px] shrink-0 items-center border-t border-[#777] bg-[#f5f5f5] font-['Liberation_Sans',sans-serif] text-[6px] leading-[9px] text-[#222]">
        <div className="w-[99px] bg-[#8cc08a] whitespace-pre"><span className="pl-[3px]">Calculating graphic data  16%</span></div>
        <span className="-ml-1 flex-1">Remaining Time: 00:20:55</span>
        <span className="w-[106px] border-l border-[#ccc] pl-[3px] font-['Open_Sans',sans-serif] text-[7px]">Track 4</span>
      </div>
      <Menu items={EFFECTS} active="Restoration" className="absolute top-[25px] left-[176px] z-20 w-[158px] px-[5px] pt-px" />
      <Menu items={RESTORATION} className="absolute top-[102px] left-[331px] z-20 w-[143px] py-[2px] pr-[5px] pl-[5px]" />
    </div>
  );
}
